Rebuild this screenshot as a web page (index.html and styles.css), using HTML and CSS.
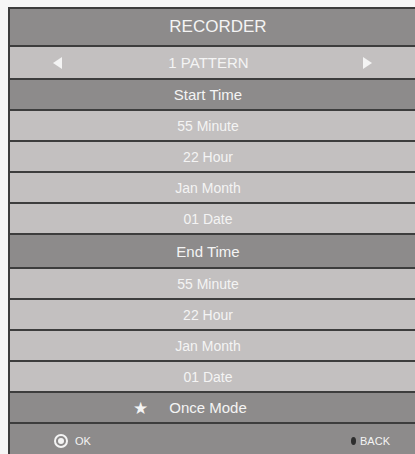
FILE: index.html
```html
<!DOCTYPE html>
<html lang="en">
<head>
    <meta charset="UTF-8">
    <meta name="viewport" content="width=device-width, initial-scale=1.0">
    <title>Recorder</title>
    <link rel="stylesheet" href="styles.css">
</head>
<body>
    <!-- Recorder setup menu -->
    <div class="menu">
        <div class="row title">RECORDER</div>

        <div class="row pattern">
            <span class="arrow left"></span>
            <span class="pattern-name">1 PATTERN</span>
            <span class="arrow right"></span>
        </div>

        <div class="row section">Start Time</div>
        <div class="row item">55 Minute</div>
        <div class="row item">22 Hour</div>
        <div class="row item">Jan Month</div>
        <div class="row item">01 Date</div>

        <div class="row section end">End Time</div>
        <div class="row item">55 Minute</div>
        <div class="row item">22 Hour</div>
        <div class="row item">Jan Month</div>
        <div class="row item">01 Date</div>

        <div class="row section mode">
            <span class="star">&#9733;</span>
            <span>Once Mode</span>
        </div>

        <!-- key hints -->
        <div class="row footer">
            <div class="hint"><span class="ok-icon"></span>OK</div>
            <div class="hint"><span class="back-icon"></span>BACK</div>
        </div>
    </div>
</body>
</html>
```

FILE: styles.css
```css
/* Basic page styling */
body {
    font-family: "Liberation Sans", Arial, sans-serif;
    background-color: #f6f6f6;
    margin: 0;
    padding: 7px 0 0 8px;
    overflow: hidden;
}

/* Menu panel, runs to the right edge of the screen */
.menu {
    width: 407px;
    box-sizing: border-box;
    background-color: #c3c0c0;
    border-left: 2px solid #3d3d3d;
    border-top: 2px solid #3d3d3d;
}

.row {
    display: flex;
    align-items: center;
    justify-content: center;
    box-sizing: border-box;
    padding-right: 9px;
    color: #f4f4f4;
    font-size: 14px;
    border-bottom: 2px solid #3d3d3d;
}

/* Title bar */
.title {
    height: 38px;
    padding: 0 0 0 11px;
    font-size: 17px;
    background-color: #8d8b8b;
}

/* Pattern selector */
.pattern {
    height: 31px;
    padding: 0 43px 0 43px;
    font-size: 15px;
    border-bottom: none;
    background-color: #c3c0c0;
}
.pattern-name {
    flex: 1;
    text-align: center;
    padding-right: 8px;
}
.arrow {
    width: 0;
    height: 0;
    border-top: 6px solid transparent;
    border-bottom: 6px solid transparent;
}
.arrow.left { border-right: 9px solid #f4f4f4; }
.arrow.right { border-left: 9px solid #f4f4f4; }

/* Dark section headings */
.section {
    height: 33px;
    font-size: 15px;
    background-color: #8d8b8b;
    border-top: 2px solid #3d3d3d;
}
.section.end {
    height: 34px;
    border-top: none;
}
.section.mode {
    height: 31px;
    border-top: none;
    position: relative;
}
.star {
    position: absolute;
    left: 123px;
    font-size: 17px;
    top: 5px;
}

/* Light value rows */
.item {
    height: 31px;
    background-color: #c3c0c0;
}

/* Footer with key hints */
.footer {
    height: 36px;
    justify-content: space-between;
    padding: 0 25px 3px 44px;
    font-size: 11px;
    background-color: #8d8b8b;
    border-bottom: none;
}
.hint {
    display: flex;
    align-items: center;
}
.ok-icon {
    width: 10px;
    height: 10px;
    border: 2px solid #f4f4f4;
    border-radius: 50%;
    margin-right: 7px;
    position: relative;
}
.ok-icon::after {
    content: "";
    position: absolute;
    left: 2px;
    top: 2px;
    width: 6px;
    height: 6px;
    border-radius: 50%;
    background-color: #f4f4f4;
}
.back-icon {
    width: 5px;
    height: 8px;
    border-radius: 50%;
    background-color: #2e2e2e;
    margin-right: 4px;
}
```
